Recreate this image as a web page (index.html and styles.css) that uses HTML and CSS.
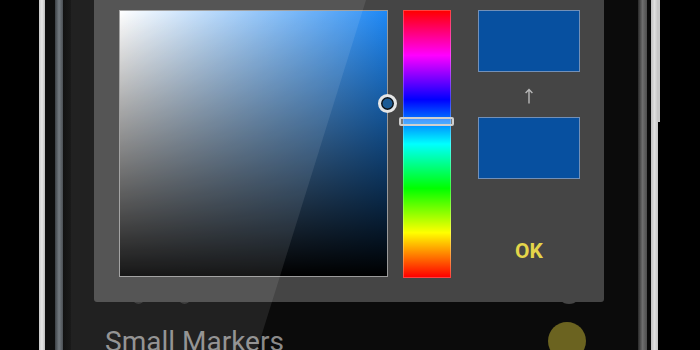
FILE: index.html
```html
<!DOCTYPE html>
<html>
<head>
<meta charset="utf-8">
<link rel="stylesheet" href="styles.css">
</head>
<body>
<div class="device">
  <div class="bezel bezel-left">
    <span class="b-black-l"></span>
    <span class="b-light-l"></span>
    <span class="b-dark"></span>
    <span class="b-gray-l"></span>
    <span class="b-dark2"></span>
  </div>
  <div class="screen">
    <span class="peek peek-a"></span>
    <span class="peek peek-b"></span>
    <span class="peek peek-toggle"></span>
    <div class="dialog">
      <div class="sv">
        <span class="sv-cursor"></span>
      </div>
      <div class="hue">
        <span class="hue-thumb"></span>
      </div>
      <div class="previews">
        <div class="swatch"></div>
        <div class="arrow">
          <svg width="10" height="16" viewBox="0 0 10 16"><path d="M5 1.5V15.5M1.6 5L5 1.5L8.4 5" fill="none" stroke="#b8b8b8" stroke-width="1.4"/></svg>
        </div>
        <div class="swatch"></div>
        <div class="ok">OK</div>
      </div>
    </div>
    <div class="row">
      <span class="label">Small Markers</span>
      <span class="dot"></span>
    </div>
    <div class="glare"></div>
  </div>
  <div class="bezel bezel-right">
    <span class="b-gray-r"></span>
    <span class="b-dark3"></span>
    <span class="b-light-r"><span class="button"></span></span>
  </div>
</div>
</body>
</html>
```

FILE: styles.css
```css
html, body {
  margin: 0;
  padding: 0;
  background: #000;
}
body {
  width: 700px;
  height: 350px;
  overflow: hidden;
  font-family: Roboto, "Noto Sans", sans-serif;
}
.device {
  display: flex;
  height: 350px;
}
.bezel {
  display: flex;
  height: 100%;
}
.bezel span { display: block; height: 100%; }
.b-black-l { width: 39px; background: #000; }
.b-light-l { width: 6px; background: linear-gradient(to right, #c8c8c8, #e6e6e6, #bdbdbd); }
.b-dark { width: 10px; background: #0e0e0e; }
.b-gray-l { width: 8px; background: linear-gradient(to right, #3c4146, #737a80, #4a4f54); }
.b-dark2 { width: 8px; background: linear-gradient(to right, #121212, #1a1a1a); }

.b-gray-r { width: 9px; background: linear-gradient(to right, #2a2a2a, #6e6e6e, #4e4e4e); }
.b-dark3 { width: 4px; background: #0a0a0a; }
.b-light-r {
  width: 7px;
  position: relative;
  background: linear-gradient(to right, #bfbfbf, #e0e0e0, #c4c4c4);
}
.bezel-right .button {
  position: absolute;
  left: 7px;
  top: 0;
  width: 2px;
  height: 122px;
  background: #c8c8c8;
}

.screen {
  position: relative;
  width: 567px;
  height: 350px;
  background: #0b0b0b;
  overflow: hidden;
}
.dialog {
  position: relative;
  z-index: 2;
  margin-left: 23px;
  width: 510px;
  height: 302px;
  box-sizing: border-box;
  padding: 10px 0 0 25px;
  background: #454545;
  border-radius: 0 0 3px 3px;
  display: flex;
  align-items: flex-start;
}
.sv {
  position: relative;
  width: 269px;
  height: 267px;
  box-sizing: border-box;
  border: 1px solid #9a9a9a;
  background:
    linear-gradient(to top, #000, rgba(0,0,0,0)),
    linear-gradient(to right, #fff, #1e88f5);
}
.sv-cursor {
  position: absolute;
  left: 258px;
  top: 83px;
  width: 19px;
  height: 19px;
  box-sizing: border-box;
  border-radius: 50%;
  border: 3px solid #e6e6e6;
  box-shadow: inset 0 0 0 1.5px #111;
  background: #1b5a94;
}
.hue {
  position: relative;
  margin-left: 15px;
  width: 48px;
  height: 268px;
  box-sizing: border-box;
  border: 1px solid rgba(255,255,255,0.25);
  background: linear-gradient(to bottom,
    #ff0000 0%, #ff00ff 16.67%, #0000ff 33.33%, #00ffff 50%,
    #00ff00 66.67%, #ffff00 83.33%, #ff0000 100%);
}
.hue-thumb {
  position: absolute;
  left: -5px;
  top: 106px;
  width: 55px;
  height: 9px;
  box-sizing: border-box;
  border: 2px solid #cfcfcf;
  border-radius: 2px;
  background: rgba(255,255,255,0.28);
}
.previews {
  margin-left: 27px;
  width: 102px;
  display: flex;
  flex-direction: column;
  align-items: stretch;
}
.swatch {
  height: 62px;
  box-sizing: border-box;
  border: 1px solid #7290b8;
  background: #0750a0;
}
.arrow {
  height: 45px;
  display: flex;
  justify-content: center;
  align-items: center;
  padding-top: 3px;
  box-sizing: border-box;
}
.arrow svg { display: block; }
.ok {
  margin-top: 60px;
  text-align: center;
  font-size: 21px;
  line-height: 24px;
  font-weight: 700;
  color: #e4d54a;
}
.row {
  display: flex;
  justify-content: space-between;
  align-items: flex-start;
  margin-top: 20px;
  padding: 0 52px 0 34px;
}
.label {
  margin-top: 5px;
  font-size: 28px;
  line-height: 30px;
  color: #8a8a8a;
}
.dot {
  width: 38px;
  height: 38px;
  border-radius: 50%;
  background: #6b6320;
}
.peek {
  position: absolute;
  z-index: 1;
  border-radius: 50%;
  background: #3a3a3a;
}
.peek-a { left: 62px; top: 294px; width: 11px; height: 10px; background: #2e2e2e; }
.peek-b { left: 108px; top: 294px; width: 11px; height: 10px; background: #2e2e2e; }
.peek-toggle { left: 486px; top: 280px; width: 24px; height: 24px; background: #454545; }
.glare {
  position: absolute;
  z-index: 5;
  left: 0;
  top: 0;
  width: 100%;
  height: 100%;
  pointer-events: none;
  background: rgba(255,255,255,0.09);
  clip-path: polygon(0 0, 295px 0, 186px 350px, 0 350px);
}
```
